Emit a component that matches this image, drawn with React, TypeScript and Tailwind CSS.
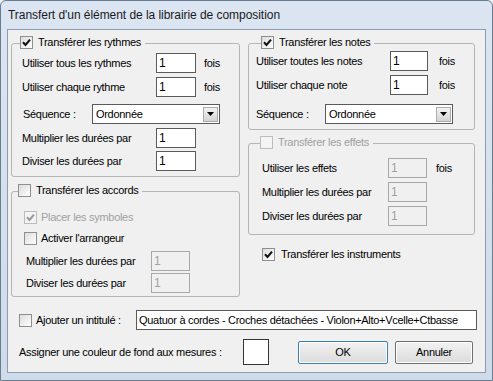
import React from "react";

const font = "font-['Liberation_Sans',Arial,sans-serif] text-[11px] tracking-[-0.3px] leading-none";

function Check({ checked = false, disabled = false }: { checked?: boolean; disabled?: boolean }) {
  return (
    <span
      className={`flex h-[13px] w-[13px] shrink-0 items-center justify-center border ${
        disabled
          ? "border-[#bcbcbc] bg-[#f4f4f4]"
          : "border-[#8e8f8f] bg-gradient-to-br from-[#dcdcdc] to-white"
      }`}
    >
      {checked && (
        <svg width="9" height="9" viewBox="0 0 9 9">
          <path
            d="M1 4.3 L3.5 6.9 L8 1.6"
            fill="none"
            stroke={disabled ? "#9a9a9a" : "#111"}
            strokeWidth="2.1"
          />
        </svg>
      )}
    </span>
  );
}

function Input({ value, w, disabled = false }: { value: string; w: string; disabled?: boolean }) {
  return (
    <div
      className={`flex h-[20px] items-center border px-[2px] ${w} ${
        disabled ? "border-[#a8a8a8] bg-[#f0f0f0] text-[#a0a0a0]" : "border-[#5a5a5a] bg-white text-black"
      }`}
    >
      <span className="text-[12px]">{value}</span>
    </div>
  );
}

function Select({ w }: { w: string }) {
  return (
    <div className={`flex h-[20px] items-center justify-between border border-[#5a5a5a] bg-white pl-[3px] pr-[1px] ${w}`}>
      <span>Ordonnée</span>
      <span className="flex h-[15px] w-[15px] items-center justify-center border border-[#acacac] bg-gradient-to-b from-[#f2f2f2] to-[#d4d4d4]">
        <svg width="7" height="4" viewBox="0 0 7 4">
          <path d="M0 0 H7 L3.5 4 Z" fill="#000" />
        </svg>
      </span>
    </div>
  );
}

function Legend({
  label,
  checked,
  disabled,
  left,
}: {
  label: string;
  checked?: boolean;
  disabled?: boolean;
  left: string;
}) {
  return (
    <div className={`absolute top-[-8px] flex h-[13px] items-center gap-[5px] bg-[#f0f0f0] pr-[4px] ${left}`}>
      <Check checked={checked} disabled={disabled} />
      <span className={disabled ? "text-[#a0a0a0]" : "text-black"}>{label}</span>
    </div>
  );
}

function Row({
  label,
  labelW,
  children,
  className = "",
}: {
  label: string;
  labelW: string;
  children: React.ReactNode;
  className?: string;
}) {
  return (
    <div className={`flex h-[20px] items-center ${className}`}>
      <span className={`${labelW} shrink-0`}>{label}</span>
      {children}
    </div>
  );
}

export default function App() {
  return (
    <div className={`${font} relative h-[381px] w-[493px] overflow-hidden bg-[#f0f0f0] text-black`}>
      <div className="flex h-full w-full flex-col rounded-t-[6px] border border-[#6a7c92] bg-gradient-to-b from-[#dce6f2] to-[#cfdbe9]">
        {/* title bar */}
        <div className="flex h-[28px] items-center pl-[7px] text-[12px] tracking-[-0.05px] text-[#1a1a1a]">
          Transfert d'un élément de la librairie de composition
        </div>

        <div className="mx-[6px] h-[344px] border border-[#8d9db1] bg-[#f0f0f0]">
          <div className="grid grid-cols-[229px_227px] gap-x-[8px] pl-[3px] pt-[13px]">
            {/* left column */}
            <div className="flex flex-col">
              <div className="relative h-[134px] rounded-[3px] border border-[#b5b5b5] pl-[10px] pt-[9px]">
                <Legend label="Transférer les rythmes" checked left="left-[8px]" />
                <Row label="Utiliser tous les rythmes" labelW="w-[134px]">
                  <Input value="1" w="w-[40px]" />
                  <span className="ml-[8px]">fois</span>
                </Row>
                <Row label="Utiliser chaque rythme" labelW="w-[134px]" className="mt-[4px]">
                  <Input value="1" w="w-[40px]" />
                  <span className="ml-[8px]">fois</span>
                </Row>
                <Row label="Séquence :" labelW="w-[70px] pl-[1px]" className="mt-[7px]">
                  <Select w="w-[128px]" />
                </Row>
                <Row label="Multiplier les durées par" labelW="w-[134px]" className="mt-[4px]">
                  <Input value="1" w="w-[40px]" />
                </Row>
                <Row label="Diviser les durées par" labelW="w-[134px]" className="mt-[3px]">
                  <Input value="1" w="w-[40px]" />
                </Row>
              </div>

              <div className="relative mt-[14px] h-[106px] rounded-[3px] border border-[#b5b5b5] pl-[12px] pt-[19px]">
                <Legend label="Transférer les accords" left="left-[6px]" />
                <div className="flex h-[13px] items-center gap-[4px]">
                  <Check checked disabled />
                  <span className="text-[#a0a0a0]">Placer les symboles</span>
                </div>
                <div className="mt-[8px] flex h-[13px] items-center gap-[4px]">
                  <Check />
                  <span>Activer l'arrangeur</span>
                </div>
                <Row label="Multiplier les durées par" labelW="w-[127px] pl-[2px]" className="mt-[6px]">
                  <Input value="1" w="w-[39px]" disabled />
                </Row>
                <Row label="Diviser les durées par" labelW="w-[127px] pl-[2px]" className="mt-[2px]">
                  <Input value="1" w="w-[39px]" disabled />
                </Row>
              </div>
            </div>

            {/* right column */}
            <div className="flex flex-col">
              <div className="relative h-[87px] rounded-[3px] border border-[#b5b5b5] pl-[7px] pt-[7px]">
                <Legend label="Transférer les notes" checked left="left-[12px]" />
                <Row label="Utiliser toutes les notes" labelW="w-[134px]">
                  <Input value="1" w="w-[38px]" />
                  <span className="ml-[11px]">fois</span>
                </Row>
                <Row label="Utiliser chaque note" labelW="w-[134px]" className="mt-[4px]">
                  <Input value="1" w="w-[38px]" />
                  <span className="ml-[11px]">fois</span>
                </Row>
                <Row label="Séquence :" labelW="w-[69px]" className="mt-[9px]">
                  <Select w="w-[128px]" />
                </Row>
              </div>

              <div className="relative mt-[13px] h-[92px] rounded-[3px] border border-[#b5b5b5] pl-[13px] pt-[14px]">
                <Legend label="Transférer les effets" disabled left="left-[11px]" />
                <Row label="Utiliser les effets" labelW="w-[126px]">
                  <Input value="1" w="w-[39px]" disabled />
                  <span className="ml-[9px]">fois</span>
                </Row>
                <Row label="Multiplier les durées par" labelW="w-[126px]" className="mt-[4px]">
                  <Input value="1" w="w-[39px]" disabled />
                </Row>
                <Row label="Diviser les durées par" labelW="w-[126px]" className="mt-[4px]">
                  <Input value="1" w="w-[39px]" disabled />
                </Row>
              </div>

              <div className="ml-[14px] mt-[13px] flex h-[13px] items-center gap-[6px]">
                <Check checked />
                <span>Transférer les instruments</span>
              </div>
            </div>
          </div>

          {/* bottom */}
          <div className="ml-[11px] mt-[13px] flex h-[20px] items-center">
            <Check />
            <span className="ml-[4px] w-[100px]">Ajouter un intitulé :</span>
            <div className="flex h-[20px] w-[341px] items-center overflow-hidden whitespace-nowrap border border-[#5a5a5a] bg-white px-[2px]">
              Quatuor à cordes - Croches détachées - Violon+Alto+Vcelle+Ctbasse
            </div>
          </div>

          <div className="ml-[11px] mt-[9px] flex h-[26px] items-center">
            <span className="w-[224px]">Assigner une couleur de fond aux mesures :</span>
            <div className="h-[26px] w-[26px] border border-[#333] bg-white" />
            <button className="ml-[29px] h-[23px] w-[90px] rounded-[2px] border border-[#3c7fb1] bg-gradient-to-b from-[#f2f2f2] to-[#dcdcdc] shadow-[inset_0_0_0_1px_#ffffff]">
              OK
            </button>
            <button className="ml-[7px] h-[23px] w-[78px] rounded-[2px] border border-[#707070] bg-gradient-to-b from-[#f2f2f2] to-[#dcdcdc] shadow-[inset_0_0_0_1px_#ffffff]">
              Annuler
            </button>
          </div>
        </div>
      </div>
    </div>
  );
}
